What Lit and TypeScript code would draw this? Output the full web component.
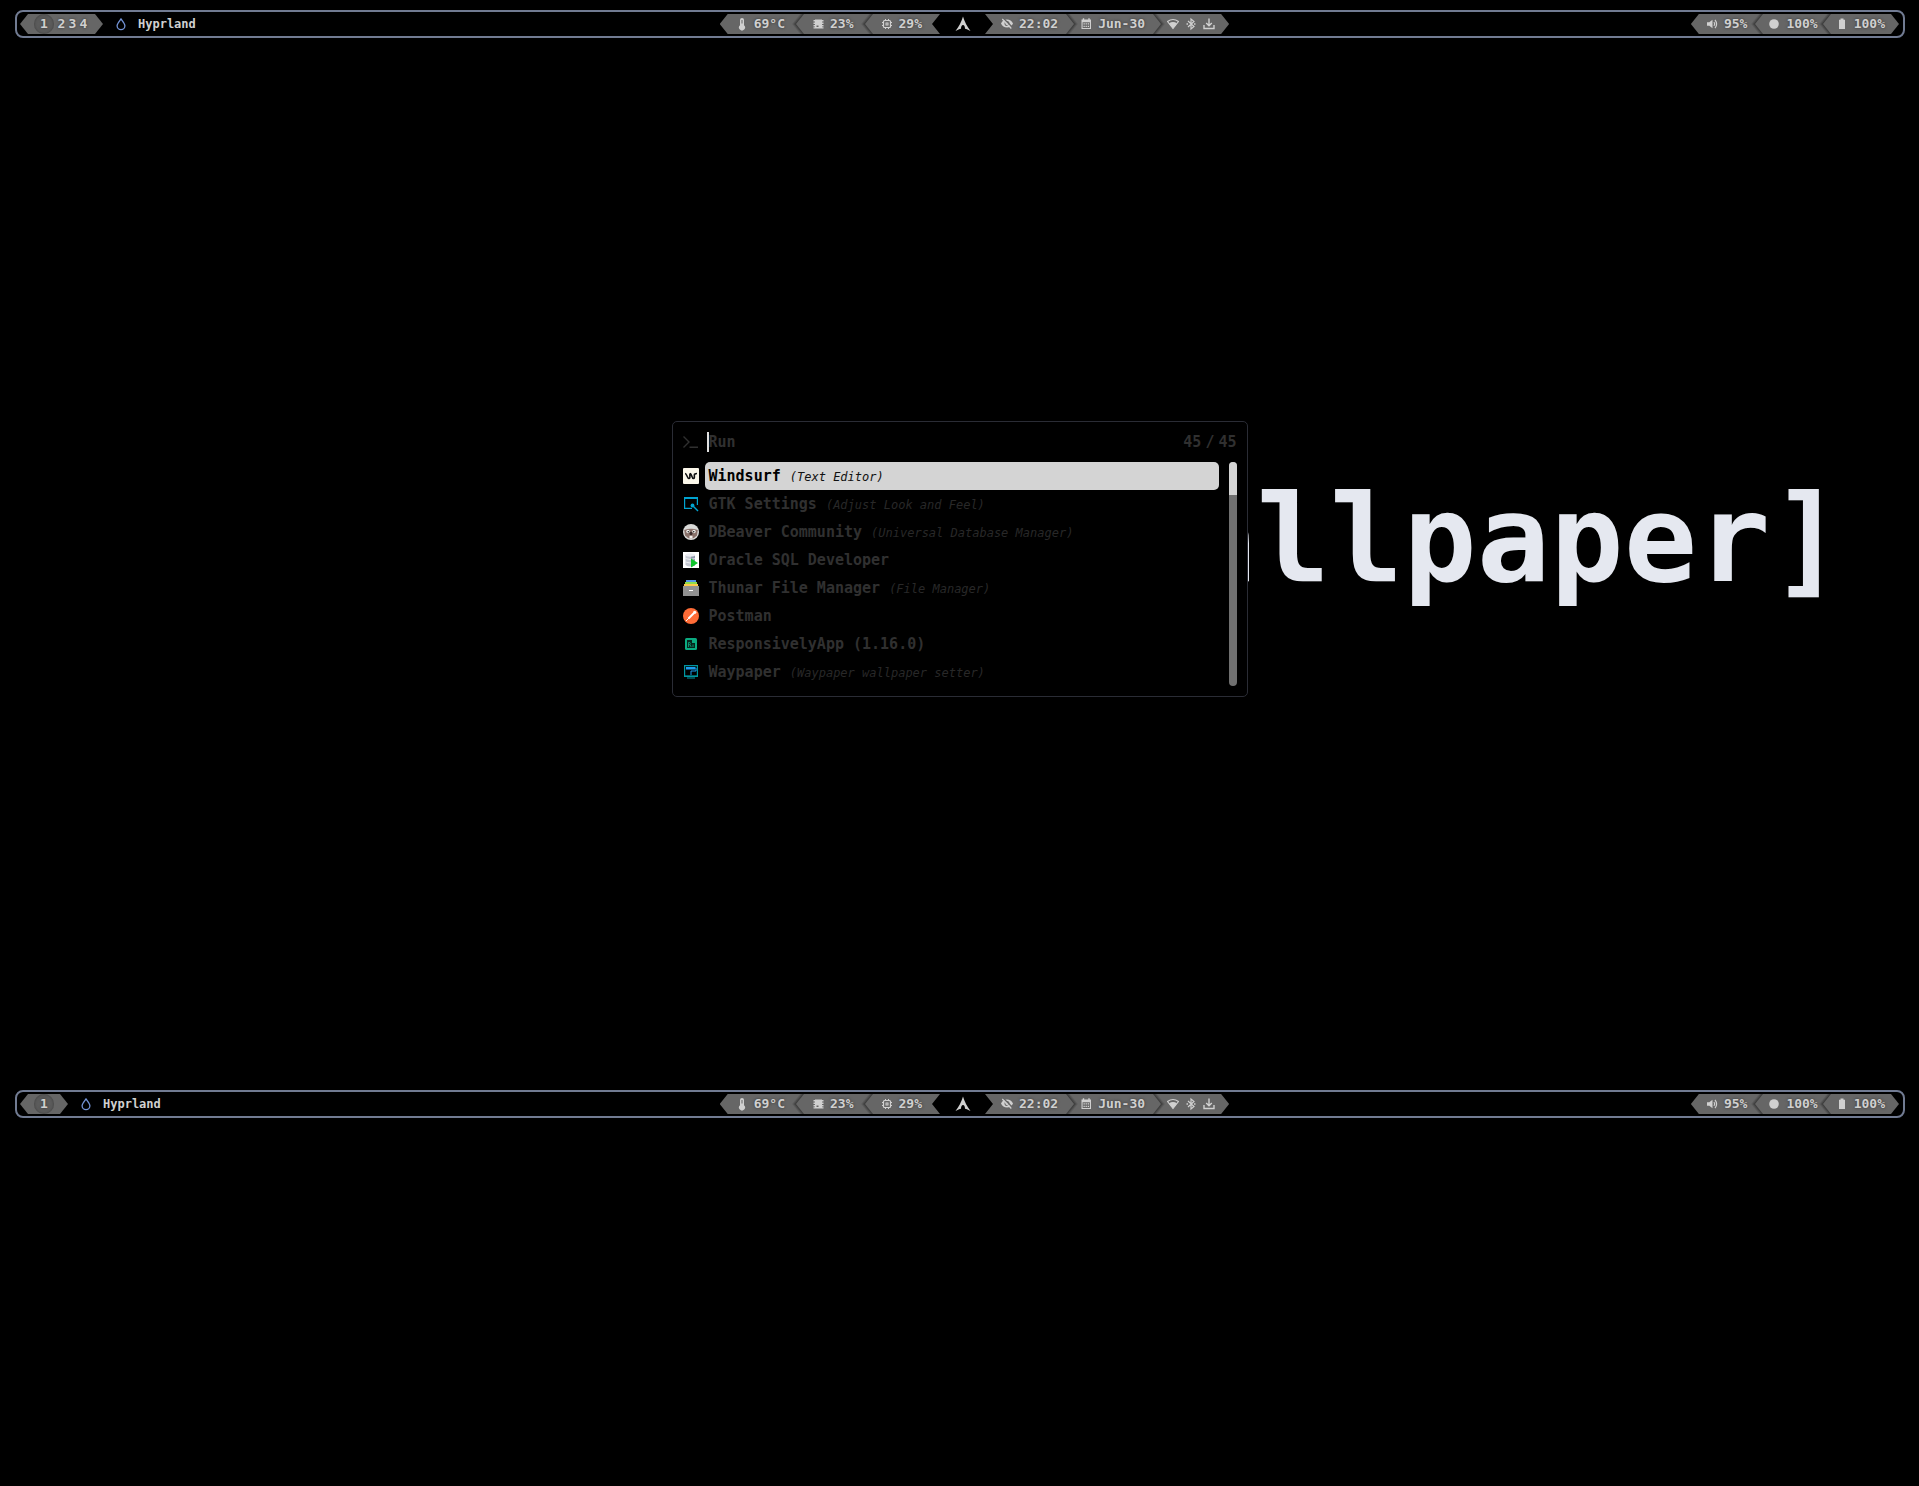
import { LitElement, html, css, svg, nothing, type SVGTemplateResult } from "lit";
import { customElement, property } from "lit/decorators.js";
import { classMap } from "lit/directives/class-map.js";

const icons: Record<string, SVGTemplateResult> = {
  thermometer: svg`<path fill="currentColor" d="M8 2a2 2 0 0 0-2 2v5.2a3 3 0 1 0 4 0V4a2 2 0 0 0-2-2z"/><path stroke="#666" d="M8 4v3.5"/>`,
  memory: svg`<path fill="currentColor" d="M5 3.500h7v9H5zM3.500 4h2v1.500h-2zM3.500 6.500h2V8h-2zM3.500 9h2v1.500h-2zM11.500 4h2v1.500h-2zM11.500 6.500h2V8h-2zM11.500 9h2v1.500h-2zM3.500 11.300h10v1.200h-10z"/><path fill="#666" d="M6.500 9.500h2v1.500h-2z"/>`,
  cpu: svg`<rect x="4.500" y="4.500" width="7" height="7" rx="1" fill="none" stroke="currentColor" stroke-width="1.200"/><rect x="7" y="7" width="2" height="2" fill="none" stroke="currentColor"/><path stroke="currentColor" d="M6.500 3v1.500M9.500 3v1.500M6.500 11.500V13M9.500 11.500V13M3 6.500h1.500M3 9.500h1.500M11.500 6.500H13M11.500 9.500H13"/>`,
  eye: svg`<path fill="currentColor" fill-rule="evenodd" d="M2 7.500C3.200 5 5.300 3.500 8 3.500S12.800 5 14 7.500c-1.200 2.500-3.300 4-6 4S3.200 10 2 7.500zM8 5a2.500 2.500 0 1 0 0 5 2.500 2.500 0 0 0 0-5z"/><circle cx="8" cy="7.500" r="1.500" fill="currentColor"/><path stroke="#666" stroke-width="1.500" d="M4.300 2.300l9 9"/><path stroke="currentColor" stroke-width="1.200" d="M3.300 3l9 9.500"/>`,
  calendar: svg`<path fill="currentColor" fill-rule="evenodd" d="M3.500 3.500h9.500v9.500H3.500zM4.600 6.300v5.600h7.300V6.300z"/><path stroke="currentColor" stroke-width="1.400" d="M5.500 2.200v2M11 2.200v2"/><path fill="currentColor" d="M5.500 7.300h1.300v1.300H5.500zM7.600 7.300h1.300v1.300H7.600zM9.700 7.300H11v1.300H9.700zM5.500 9.700h1.300V11H5.500zM7.600 9.700h1.300V11H7.600zM9.700 9.700H11V11H9.700z"/>`,
  wifi: svg`<path fill="none" stroke="currentColor" stroke-width="1.200" stroke-linejoin="round" d="M2.500 5.500Q8 1.500 13.500 5.500L8 12.500z"/><path fill="currentColor" d="M4 7.200Q8 5 12 7.200L8 12.500z"/>`,
  bluetooth: svg`<path fill="none" stroke="currentColor" stroke-width="1.200" d="M5 5l6 5.500L8 13V3l3 2.500L5 11"/><path fill="currentColor" d="M3.500 7.300h1.500v1.400H3.500zM11 7.300h1.500v1.400H11z"/>`,
  download: svg`<path fill="none" stroke="currentColor" stroke-width="1.400" d="M8 2.500v7M5.200 7L8 9.800 10.800 7M3 9v3.500h10V9"/>`,
  speaker: svg`<path fill="currentColor" d="M3 6.300h2.300L8.500 3.800v8.400L5.300 9.700H3z"/><path fill="none" stroke="currentColor" stroke-width="1.200" d="M10 6q1.500 2 0 4M11 3.800q3.200 4.200 0 8.400"/>`,
  circle: svg`<circle cx="8" cy="8" r="4.800" fill="currentColor"/>`,
  battery: svg`<path fill="currentColor" d="M6.500 2.500h3v1.300H11V13H5V3.800h1.500z"/>`,
  drop: svg`<path fill="none" stroke="#7393d6" stroke-width="1.300" d="M8 3C6.300 5.300 4.100 7.600 4.100 9.800a3.900 3.900 0 0 0 7.800 0C11.900 7.600 9.700 5.300 8 3z"/>`,
  arch: svg`<path fill="currentColor" d="M8 .5C6.500 5.500 4 10.500.5 15c2.300-1.300 4-2 5.500-2.300C6 10.500 6.800 9 8 9s2 1.500 2 3.700c1.500.3 3.200 1 5.500 2.300C12 10.500 9.500 5.500 8 .5z"/>`,
  prompt: svg`<path fill="none" stroke="currentColor" stroke-width="1.400" d="M.5 2.500L6 8 .5 13.500M6.500 13.200H15"/>`,
  windsurf: svg`<rect width="16" height="16" rx="1" fill="#fbf7ea"/><path fill="none" stroke="#111" stroke-width="1.600" d="M2 5.500c2 0 2 5 4 5 1.500 0 .5-3 1-5M7 5.500c2 0 1.500 5 3.500 5 1.500 0 .5-3 1-4.500M11.500 7c0-1.200 1-1.500 2.500-1.500"/>`,
  gtk: svg`<path fill="none" stroke="#00a3d0" stroke-width="1.200" d="M9 12.400H1.600V1.600h12.800V9"/><path fill="#00a3d0" d="M1 1h14v2H1z"/><path stroke="#00a3d0" stroke-width="1.400" d="M9.500 9.500L15 15"/><circle cx="9.500" cy="9.500" r="1.900" fill="#00a3d0"/>`,
  dbeaver: svg`<circle cx="8" cy="8" r="8" fill="#d9d9d7"/><path fill="#89716a" d="M1.200 6Q8 3.500 14.800 6L14 11.500Q8 18 2 11.500z"/><circle cx="5" cy="7.500" r="1.700" fill="#f2efec"/><circle cx="11" cy="7.500" r="1.700" fill="#f2efec"/><circle cx="5.300" cy="7.700" r=".8" fill="#222"/><circle cx="10.700" cy="7.700" r=".8" fill="#222"/><ellipse cx="8" cy="9.500" rx="1.500" ry="1.800" fill="#3d2c2a"/><path fill="#f2efec" d="M6.500 11.800h3v2.700h-3z"/>`,
  oracle: svg`<path fill="#fff" d="M0 0h16v16H0z"/><path fill="#c4c8d2" d="M2.500 3v10q4.500 3 9.500 0V3z"/><path fill="#9299ad" d="M8 4h4v9.500L8 15z"/><ellipse cx="7.200" cy="3" rx="4.700" ry="1.700" fill="#eceef3"/><path stroke="#fff" stroke-width=".7" fill="none" d="M2.500 6.500q4.500 2 9.500 0M2.500 10q4.500 2 9.500 0"/><path fill="#0fc42c" d="M8 6.500l7 4.500-7 4.500z"/>`,
  thunar: svg`<path fill="#5596e8" d="M3 0h10v3H3z"/><path fill="#8fdc4a" d="M2 2h12v3H2z"/><path fill="#fbca4b" d="M1 4h14v3H1z"/><path fill="#919191" d="M0 6h16v10H0z"/><path fill="#fff" d="M6 10h4v1H6z"/>`,
  postman: svg`<circle cx="8" cy="8" r="8" fill="#ff6c37"/><path stroke="#fff" stroke-width="2" d="M5.500 10.500L11 5"/><path stroke="#fff" stroke-width="1" d="M3 13l3-3"/><circle cx="11.700" cy="4.300" r="1.600" fill="#fff"/>`,
  responsively: svg`<rect x="2" y="2" width="12" height="12" rx="1.500" fill="#0baa80"/><path fill="#07241c" d="M4 4h5v3h3v5H4z"/><path fill="none" stroke="#0baa80" stroke-width=".8" d="M5.500 11V6.500h1.300q1.200 1.200 0 2.200H5.500M7 8.700L8.200 11M10 8.500V11"/>`,
  waypaper: svg`<path fill="none" stroke="#00969f" stroke-width="1.200" d="M1.600 1.600h12.800v10.800H1.600z"/><path fill="#00969f" d="M1 11.500h14V13H1zM4 13.500h8V14.500H4z"/><path fill="#1c9cf0" d="M3 3h9v2.500H3z"/><path fill="none" stroke="#1c9cf0" d="M12 4h1v3H8v4"/>`,
};

@customElement("ui-icon")
class UiIcon extends LitElement {
  @property() name = "";
  static styles = css`
    :host { display: block; flex: none; width: 16px; height: 16px; }
    svg { display: block; width: 100%; height: 100%; }
  `;
  render() {
    return html`<svg viewBox="0 0 16 16" aria-hidden="true">${icons[this.name] ?? nothing}</svg>`;
  }
}

interface Segment { icons: string[]; text?: string; }

const stats: Segment[] = [
  { icons: ["thermometer"], text: "69°C" },
  { icons: ["memory"], text: "23%" },
  { icons: ["cpu"], text: "29%" },
];
const clock: Segment[] = [
  { icons: ["eye"], text: "22:02" },
  { icons: ["calendar"], text: "Jun-30" },
  { icons: ["wifi", "bluetooth", "download"] },
];
const levels: Segment[] = [
  { icons: ["speaker"], text: "95%" },
  { icons: ["circle"], text: "100%" },
  { icons: ["battery"], text: "100%" },
];

@customElement("status-bar")
class StatusBar extends LitElement {
  @property({ type: Number }) workspaces = 1;

  static styles = css`
    :host { display: block; color: #d0d0d0; font: bold 13px/20px "DejaVu Sans Mono", monospace; }
    .bar {
      display: grid; grid-template-columns: 920fr 45px 914fr; align-items: center;
      margin: 10px 14px 0 15px; padding: 2px 4px 2px 3px;
      border: 2px solid #717b92; border-radius: 8px;
    }
    .side { display: flex; align-items: center; justify-content: space-between; }
    .left { display: flex; align-items: center; }
    .logo { display: grid; place-items: center; }
    .group { display: flex; height: 20px; padding: 0 8px; background: #666; text-shadow: 0 0 3px #333; }
    .stats { --pre: 6px; --post: 11px; clip-path: polygon(0 50%, 8px 0, 100% 0, calc(100% - 8px) 50%, 100% 100%, 8px 100%); }
    .stats .segment:last-child { --post: 10px; }
    .clock { --pre: 4px; --post: 8px; clip-path: polygon(0 0, calc(100% - 8px) 0, 100% 50%, calc(100% - 8px) 100%, 0 100%, 8px 50%); }
    .clock .segment:last-child { --post: 4px; gap: 2px; }
    .levels, .spaces { --pre: 3px; --post: 5px; clip-path: polygon(0 50%, 8px 0, calc(100% - 8px) 0, 100% 50%, calc(100% - 8px) 100%, 8px 100%); }
    .levels .segment:first-child { --post: 8px; }
    .levels .segment:last-child { --post: 6px; }
    .segment { display: flex; align-items: center; gap: 4px; padding: 0 var(--post) 0 var(--pre); }
    .segment:first-child { padding-left: 6px; }
    .levels .segment:first-child { padding-left: 5px; }
    .divider { display: block; flex: none; width: 8px; height: 20px; overflow: visible; }
    .clock .divider { transform: scaleX(-1); }
    .spaces { align-items: center; padding: 0 14px; }
    .space {
      width: 11px; height: 20px; padding: 0; border: 0; background: none;
      color: inherit; font: inherit; text-align: center; text-shadow: inherit;
    }
    .active {
      width: 20px; border-radius: 10px; background: #5c5c5c;
      box-shadow: inset 0 0 3px #3c3c3c;
    }
    .active + .space { margin-left: 2px; }
    .window { display: flex; align-items: center; gap: 9px; margin-left: 10px; font-size: 12px; }
  `;

  private group(name: string, segments: Segment[]) {
    return html`<div class="group ${name}">
      ${segments.map((s, i) => html`
        ${i ? html`<svg class="divider" viewBox="0 0 8 20" aria-hidden="true">
          <g fill="none" stroke="#222">
            <path d="M8 0L0 10l8 10" stroke-width="6" opacity=".15"/>
            <path d="M8 0L0 10l8 10" stroke-width="4" opacity=".25"/>
            <path d="M8 0L0 10l8 10" stroke-width="2" opacity=".35"/>
          </g>
          <path fill="#666" d="M9 0H8L0 10l8 10h4V0z"/>
        </svg>` : nothing}
        <div class="segment">
          ${s.icons.map((n) => html`<ui-icon name=${n}></ui-icon>`)}
          ${s.text ? html`<span>${s.text}</span>` : nothing}
        </div>`)}
    </div>`;
  }

  render() {
    return html`<header class="bar">
      <div class="side">
        <div class="left">
          <nav class="group spaces" aria-label="Workspaces">
            ${Array.from({ length: this.workspaces }, (_, i) => html`<button
              class=${classMap({ space: true, active: i === 0 })}>${i + 1}</button>`)}
          </nav>
          <div class="window"><ui-icon name="drop"></ui-icon><span>Hyprland</span></div>
        </div>
        ${this.group("stats", stats)}
      </div>
      <div class="logo"><ui-icon name="arch"></ui-icon></div>
      <div class="side">
        ${this.group("clock", clock)}
        ${this.group("levels", levels)}
      </div>
    </header>`;
  }
}

const apps = [
  { icon: "windsurf", name: "Windsurf", note: "(Text Editor)" },
  { icon: "gtk", name: "GTK Settings", note: "(Adjust Look and Feel)" },
  { icon: "dbeaver", name: "DBeaver Community", note: "(Universal Database Manager)" },
  { icon: "oracle", name: "Oracle SQL Developer" },
  { icon: "thunar", name: "Thunar File Manager", note: "(File Manager)" },
  { icon: "postman", name: "Postman" },
  { icon: "responsively", name: "ResponsivelyApp (1.16.0)" },
  { icon: "waypaper", name: "Waypaper", note: "(Waypaper wallpaper setter)" },
];

@customElement("app-launcher")
class AppLauncher extends LitElement {
  static styles = css`
    :host {
      display: block; box-sizing: border-box; width: 100%; max-width: 576px; padding: 10px;
      border: 1px solid #2a2c35; border-radius: 5px; background: #000;
      color: #303030; font: bold 15px/20px "DejaVu Sans Mono", monospace;
    }
    .search { display: flex; align-items: center; height: 20px; margin-bottom: 10px; }
    .entry {
      flex: 1; min-width: 0; height: 20px; margin-left: 8px; padding: 0;
      border: 0; border-left: 2px solid #e0e0e0; outline: 0; background: none;
      color: inherit; font: inherit;
    }
    .entry::placeholder { color: #303030; opacity: 1; }
    .count { display: flex; gap: 4px; }
    .body { display: flex; gap: 10px; }
    .list { flex: 1; min-width: 0; margin: 0; padding: 0; list-style: none; }
    .row {
      display: flex; align-items: center; gap: 6px; width: 100%; height: 28px; padding: 0;
      border: 0; background: none; color: inherit; font: inherit; text-align: left;
    }
    .label { flex: 1; min-width: 0; padding: 4px; border-radius: 5px; white-space: pre; }
    .note { color: #282828; font-size: 12px; line-height: 16px; font-weight: normal; font-style: italic; }
    .selected .label { background: #d4d4d4; color: #000; }
    .selected .note { color: #111; }
    .track { width: 8px; border-radius: 4px; background: #707070; overflow: hidden; }
    .thumb { height: 33px; background: #d4d4d4; }
  `;
  render() {
    return html`
      <div class="search">
        <ui-icon name="prompt"></ui-icon>
        <input class="entry" type="text" placeholder="Run" aria-label="Run">
        <div class="count"><span>45</span><span>/</span><span>45</span></div>
      </div>
      <div class="body">
        <ul class="list">
          ${apps.map((a, i) => html`<li><button class=${classMap({ row: true, selected: i === 0 })}>
            <ui-icon name=${a.icon}></ui-icon>
            <span class="label">${a.name}${a.note ? html` <span class="note">${a.note}</span>` : nothing}</span>
          </button></li>`)}
        </ul>
        <div class="track"><div class="thumb"></div></div>
      </div>`;
  }
}

@customElement("app-root")
class AppRoot extends LitElement {
  static styles = css`
    :host { display: grid; grid-template-rows: 1080fr 406fr; min-height: 100vh; background: #000; overflow: hidden; }
    .screen { position: relative; display: flex; flex-direction: column; min-width: 0; }
    .desktop { flex: 1; display: grid; grid-template-columns: 1fr; place-items: center; }
    .wallpaper {
      position: absolute; top: 467px; right: 75px;
      color: #e5e8f0; font: bold 122px/144px "DejaVu Sans Mono", monospace; white-space: pre;
    }
    .window { position: relative; }
  `;
  render() {
    return html`
      <section class="screen">
        <div class="wallpaper">allpaper]</div>
        <status-bar .workspaces=${4}></status-bar>
        <main class="desktop"><app-launcher class="window"></app-launcher></main>
      </section>
      <section class="screen">
        <status-bar .workspaces=${1}></status-bar>
      </section>`;
  }
}
